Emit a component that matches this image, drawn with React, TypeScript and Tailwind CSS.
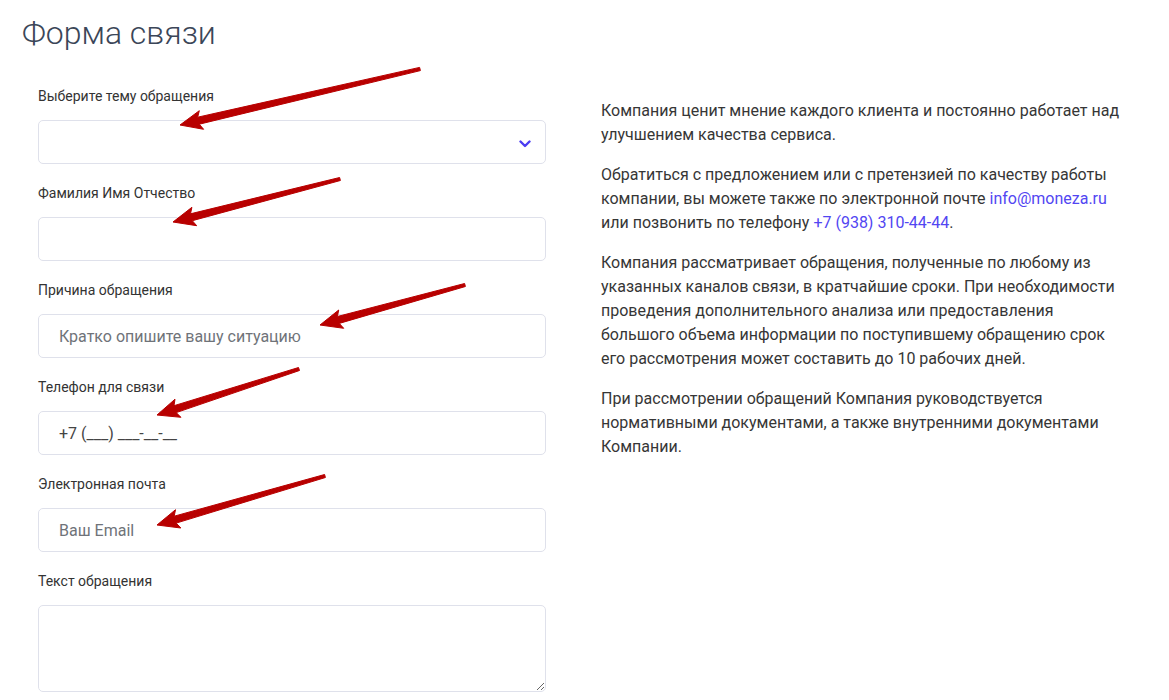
import React from 'react'

const font = { fontFamily: 'Roboto, "Noto Sans", Arial, sans-serif' }

const arrows: [number, number, number, number][] = [
  [420, 69, 180, 125],
  [340, 179, 173, 222],
  [465, 285, 320, 325],
  [299, 369, 157, 415],
  [325, 476, 157, 525],
]

function arrowPoints(tx: number, ty: number, px: number, py: number) {
  const dx = px - tx
  const dy = py - ty
  const len = Math.hypot(dx, dy)
  const ux = dx / len
  const uy = dy / len
  const nx = -uy
  const ny = ux
  const L = 19
  const W = 9.5
  const bx = px - ux * L
  const by = py - uy * L
  const pts = [
    [tx + nx * 1.6, ty + ny * 1.6],
    [bx + nx * 3.6, by + ny * 3.6],
    [bx - ux * 3 + nx * W, by - uy * 3 + ny * W],
    [px, py],
    [bx - ux * 3 - nx * W, by - uy * 3 - ny * W],
    [bx - nx * 3.6, by - ny * 3.6],
    [tx - nx * 1.6, ty - ny * 1.6],
  ]
  return pts.map(p => p[0].toFixed(1) + ',' + p[1].toFixed(1)).join(' ')
}

function Label({ children }: { children: React.ReactNode }) {
  return <div className="text-[14px] leading-[20px] text-[#333]">{children}</div>
}

const boxCls =
  'mt-[14px] h-[44px] w-full rounded-[5px] border border-[#dfe1eb] bg-white px-5 text-[16px] text-[#444] outline-none placeholder:text-[#6f7379]'

export default function App() {
  return (
    <div className="relative min-h-[700px] bg-white px-[22px] pt-[14px]" style={font}>
      <h1 className="text-[32px] font-light leading-[38px] text-[#3b4658]">Форма связи</h1>

      <div className="mt-[34px] flex">
        <div className="ml-[16px] w-[508px] shrink-0">
          <Label>Выберите тему обращения</Label>
          <div className="relative mt-[14px] h-[44px] w-full rounded-[5px] border border-[#dfe1eb] bg-white">
            <svg className="absolute right-[14px] top-[19px]" width="12" height="8" viewBox="0 0 12 8">
              <path d="M1.5 1.5 L6 6 L10.5 1.5" fill="none" stroke="#4b3df2" strokeWidth="2.4" strokeLinecap="round" strokeLinejoin="round" />
            </svg>
          </div>

          <div className="mt-[19px]">
            <Label>Фамилия Имя Отчество</Label>
            <input className={boxCls} style={font} />
          </div>

          <div className="mt-[19px]">
            <Label>Причина обращения</Label>
            <input className={boxCls} style={font} placeholder="Кратко опишите вашу ситуацию" />
          </div>

          <div className="mt-[19px]">
            <Label>Телефон для связи</Label>
            <input className={boxCls} style={font} defaultValue="+7 (___) ___-__-__" />
          </div>

          <div className="mt-[19px]">
            <Label>Электронная почта</Label>
            <input className={boxCls} style={font} placeholder="Ваш Email" />
          </div>

          <div className="mt-[19px]">
            <Label>Текст обращения</Label>
            <textarea
              className="mt-[14px] block h-[87px] w-full rounded-[5px] border border-[#dfe1eb] bg-white px-5 py-2 text-[16px] text-[#444] outline-none"
              style={font}
            />
          </div>
        </div>

        <div className="ml-[55px] mt-[13px] w-[526px] text-[16px] leading-[24px] text-[#363636]">
          <p>Компания ценит мнение каждого клиента и постоянно работает над улучшением качества сервиса.</p>
          <p className="mt-4">
            Обратиться с предложением или с претензией по качеству работы компании, вы можете также по электронной почте{' '}
            <a className="text-[#5246f2]">info@moneza.ru</a> или позвонить по телефону{' '}
            <a className="text-[#5246f2]">+7 (938) 310-44-44</a>.
          </p>
          <p className="mt-4">
            Компания рассматривает обращения, полученные по любому из указанных каналов связи, в кратчайшие сроки. При
            необходимости проведения дополнительного анализа или предоставления большого объема информации по поступившему
            обращению срок его рассмотрения может составить до 10 рабочих дней.
          </p>
          <p className="mt-4">
            При рассмотрении обращений Компания руководствуется нормативными документами, а также внутренними документами
            Компании.
          </p>
        </div>
      </div>

      {/* red annotation arrows over the form */}
      <svg className="pointer-events-none absolute left-0 top-0" width="1169" height="700">
        {arrows.map((a, i) => (
          <polygon key={i} points={arrowPoints(a[0], a[1], a[2], a[3])} fill="#b80000" stroke="#b80000" strokeWidth="1" strokeLinejoin="round" />
        ))}
      </svg>
    </div>
  )
}
